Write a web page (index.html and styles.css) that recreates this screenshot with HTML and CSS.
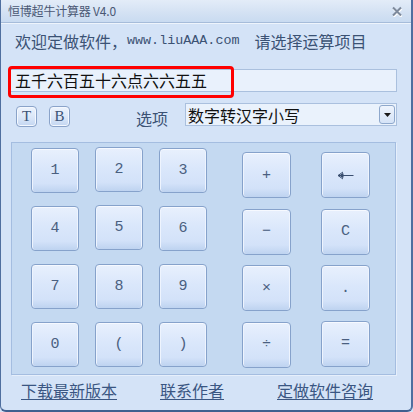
FILE: index.html
```html
<!DOCTYPE html>
<html lang="zh">
<head>
<meta charset="utf-8">
<title>恒博超牛计算器 V4.0</title>
<link rel="stylesheet" href="styles.css">
</head>
<body>
<div class="window">
  <div class="titlebar">
    <span class="title">恒博超牛计算器 V4.0</span>
    <svg class="close" width="12" height="11" viewBox="0 0 12 11">
      <path d="M2 2 L10 10 M10 2 L2 10" stroke="#ffffff" stroke-width="2.2" transform="translate(0.5,0.8)"/>
      <path d="M2 1.5 L10 9.5 M10 1.5 L2 9.5" stroke="#7e8a9c" stroke-width="2"/>
    </svg>
  </div>
  <div class="content">
    <div class="welcome">欢迎定做软件，<span class="mono">www.liuAAA.com</span><span class="prompt">请选择运算项目</span></div>
    <div class="result-row">
      <div class="result">五千六百五十六点六六五五</div>
      <div class="mark"></div>
    </div>
    <div class="options-row">
      <button class="tiny">T</button>
      <button class="tiny">B</button>
      <span class="opt-label">选项</span>
      <div class="select">
        <span>数字转汉字小写</span>
        <span class="drop"><svg width="7" height="4" viewBox="0 0 7 4"><path d="M0 0 H7 L3.5 4 Z" fill="#1a1a1a"/></svg></span>
      </div>
    </div>
    <div class="pad">
      <div class="numgrid">
        <button class="key">1</button><button class="key k-up">2</button><button class="key">3</button>
        <button class="key">4</button><button class="key k-up">5</button><button class="key">6</button>
        <button class="key">7</button><button class="key">8</button><button class="key">9</button>
        <button class="key">0</button><button class="key">(</button><button class="key">)</button>
      </div>
      <div class="opgrid">
        <button class="key">+</button>
        <button class="key" aria-label="←"><svg width="17" height="9" viewBox="0 0 17 9"><path d="M1 4.5 H16.5 M1 4.5 L6 1 M1 4.5 L6 8 M3 4.5 L6 2.5 L6 6.5 Z" stroke="#3a4f70" stroke-width="1" fill="#3a4f70"/></svg></button>
        <button class="key">−</button><button class="key">C</button>
        <button class="key">×</button><button class="key">.</button>
        <button class="key">÷</button><button class="key k-up">=</button>
      </div>
    </div>
    <div class="links">
      <a class="link l1">下载最新版本</a>
      <a class="link l2">联系作者</a>
      <a class="link l3">定做软件咨询</a>
    </div>
  </div>
</div>
</body>
</html>
```

FILE: styles.css
```css
html, body {
  margin: 0;
  padding: 0;
  background: #d4e3f7;
}
.window {
  width: 413px;
  height: 412px;
  box-sizing: border-box;
  border-left: 1px solid #4f6f9f;
  border-right: 2px solid #4f6f9f;
  border-bottom: 2px solid #3f5f8f;
  border-radius: 0 0 6px 6px;
  background: #d4e3f7;
  font-family: "Noto Sans CJK SC", "Liberation Sans", sans-serif;
  color: #3a5070;
  overflow: hidden;
}
.titlebar {
  height: 22px;
  display: flex;
  align-items: center;
  justify-content: space-between;
  padding: 0 8px 0 7px;
  background: linear-gradient(#e3ecf8, #d3e1f3 60%, #c9dbf1);
  border-bottom: 1px solid #a6bcda;
  box-shadow: 0 1px 0 #eef4fc;
}
.title {
  font-size: 12px;
  color: #4a5874;
  line-height: 22px;
  letter-spacing: -0.2px;
}
.close {
  margin-top: 1px;
}
.content {
  padding: 8px 0 0 0;
}
.welcome {
  padding-left: 14px;
  font-size: 16px;
  line-height: 20px;
  height: 20px;
  color: #3b5274;
  display: flex;
  align-items: center;
}
.mono {
  font-family: "Liberation Mono", monospace;
  font-size: 13.4px;
}
.prompt {
  margin-left: 15px;
}
.result-row {
  position: relative;
  margin: 18px 14px 0 7px;
}
.result {
  height: 23px;
  box-sizing: border-box;
  border: 1px solid #aac0de;
  background: #e9f1fc;
  font-size: 16px;
  line-height: 21px;
  color: #111;
  padding-left: 6px;
}
.mark {
  position: absolute;
  left: 0;
  top: -3px;
  width: 226px;
  height: 32px;
  box-sizing: border-box;
  border: 3px solid #ff0000;
  border-radius: 4px;
}
.options-row {
  display: flex;
  align-items: flex-start;
  margin: 11px 14px 0 15px;
  height: 24px;
}
.tiny {
  width: 21px;
  height: 21px;
  margin-top: 3px;
  padding: 0;
  border: 1px solid #8aa3c9;
  border-radius: 4px;
  background: linear-gradient(#eef4fd, #d8e5f8 60%, #c3d6f1);
  box-shadow: inset 0 0 0 1px #f4f8fe;
  font-family: "Liberation Serif", serif;
  font-size: 15px;
  line-height: 17px;
  color: #3b5274;
}
.tiny + .tiny {
  margin-left: 12px;
}
.opt-label {
  margin-left: 66px;
  font-size: 16px;
  line-height: 24px;
  margin-top: 3px;
  color: #3b5274;
}
.select {
  margin-left: 17px;
  flex: 1;
  height: 23px;
  box-sizing: border-box;
  border: 1px solid #aac0de;
  background: #eaf2fc;
  display: flex;
  align-items: center;
  justify-content: space-between;
  padding: 0 1px 0 2px;
  font-size: 16px;
  color: #111;
}
.drop {
  width: 16px;
  height: 19px;
  box-sizing: border-box;
  border: 1px solid #8ea8cc;
  border-radius: 3px;
  background: linear-gradient(#eef4fd, #d5e3f7);
  display: flex;
  align-items: center;
  justify-content: center;
}
.pad {
  margin: 15px 15px 0 10px;
  height: 233px;
  box-sizing: border-box;
  border: 1px solid #a4bde0;
  box-shadow: 1px 1px 0 #e6effb;
  background: #c4d9f1;
  display: flex;
  padding: 5px 0 0 19px;
}
.numgrid {
  display: grid;
  grid-template-columns: repeat(3, 48px);
  grid-auto-rows: 45px;
  column-gap: 16px;
  row-gap: 13px;
}
.opgrid {
  margin-left: 35px;
  margin-top: 4px;
  display: grid;
  grid-template-columns: repeat(2, 49px);
  grid-auto-rows: 46px;
  column-gap: 30px;
  row-gap: 10.5px;
}
.key {
  padding: 0;
  border: 1px solid #86a2cb;
  border-radius: 4px;
  background: linear-gradient(#e8f0fd 0%, #dae7fb 45%, #d3e2f9 80%, #bed3f0 100%);
  box-shadow: inset 0 1px 0 #f6f9ff, inset 1px 0 0 #eef4fe, inset -1px 0 0 #eef4fe;
  font-family: "Liberation Mono", monospace;
  font-size: 15px;
  color: #4a5f80;
  display: flex;
  align-items: center;
  justify-content: center;
}
.k-up {
  position: relative;
  top: -1px;
}
.links {
  position: relative;
  height: 30px;
  font-size: 16px;
}
.link {
  position: absolute;
  top: 3px;
  color: #3a5682;
  text-decoration: underline;
  text-underline-offset: 2px;
}
.l1 { left: 20px; }
.l2 { left: 159px; }
.l3 { left: 276px; }
```
